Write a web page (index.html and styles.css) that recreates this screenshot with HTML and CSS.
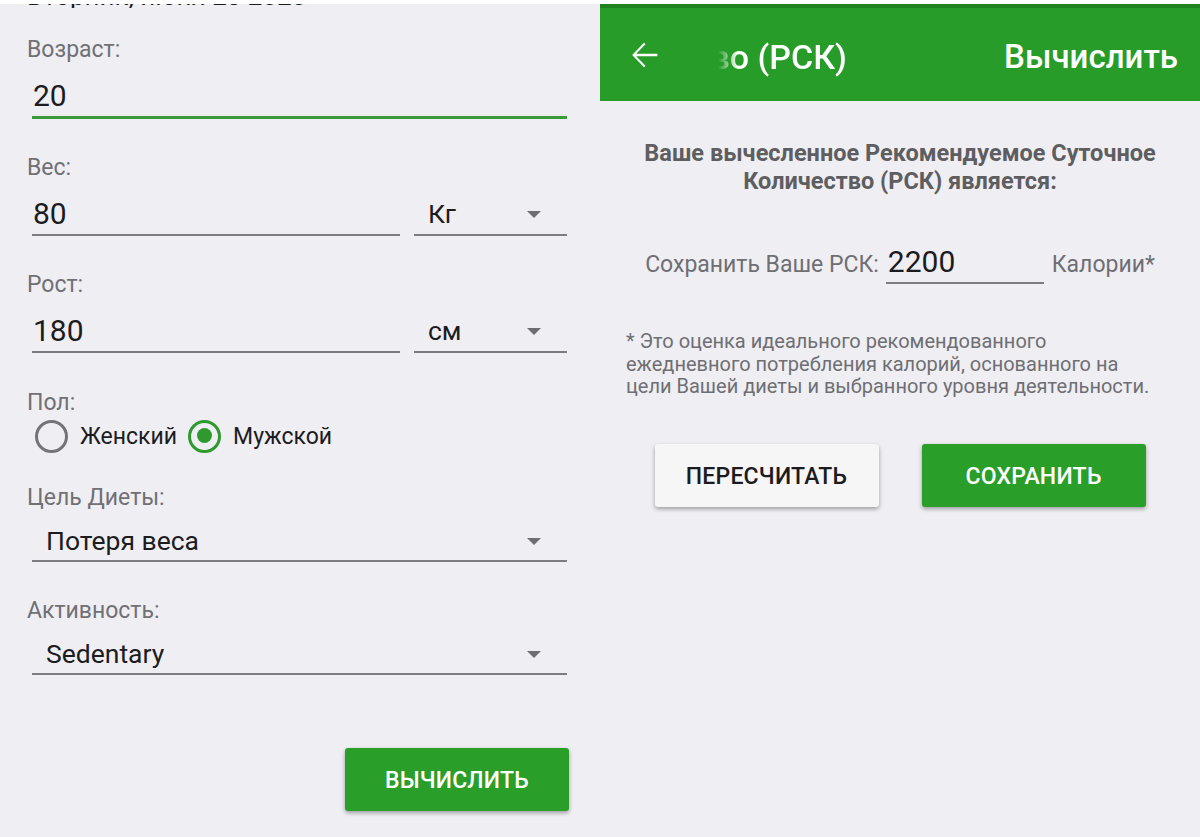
FILE: index.html
```html
<!DOCTYPE html>
<html lang="ru">
<head>
<meta charset="utf-8">
<title>РСК</title>
<link rel="stylesheet" href="styles.css">
</head>
<body>
<div class="topbar"></div>
<div class="panels">
  <section class="left">
    <div class="date"><span>Вторник, июня 23 2020</span></div>

    <div class="field f-first">
      <div class="label">Возраст:</div>
      <div class="row">
        <div class="text-input focused">20</div>
      </div>
    </div>

    <div class="field">
      <div class="label">Вес:</div>
      <div class="row">
        <div class="text-input">80</div>
        <div class="unit-select"><span>Кг</span><span class="caret"></span></div>
      </div>
    </div>

    <div class="field">
      <div class="label">Рост:</div>
      <div class="row">
        <div class="text-input">180</div>
        <div class="unit-select"><span>см</span><span class="caret"></span></div>
      </div>
    </div>

    <div class="field f-gender">
      <div class="label">Пол:</div>
      <div class="radios">
        <span class="radio"></span><span class="radio-label">Женский</span>
        <span class="radio checked"></span><span class="radio-label">Мужской</span>
      </div>
    </div>

    <div class="field f-goal">
      <div class="label">Цель Диеты:</div>
      <div class="spinner"><span>Потеря веса</span><span class="caret"></span></div>
    </div>

    <div class="field f-activity">
      <div class="label">Активность:</div>
      <div class="spinner"><span>Sedentary</span><span class="caret"></span></div>
    </div>

    <div class="actions-left">
      <button class="btn btn-green">ВЫЧИСЛИТЬ</button>
    </div>
  </section>

  <section class="right">
    <header class="appbar">
      <svg class="back" viewBox="0 0 24 24" width="40" height="40"><path d="M20 11.2H7.3l5.6-5.6-.9-.9L4.9 12l7.1 7.3.9-.9-5.6-5.6H20z" fill="#fff"/></svg>
      <div class="title-clip"><span>Количество (РСК)</span></div>
      <div class="appbar-action">Вычислить</div>
    </header>

    <h2 class="result-title">Ваше вычесленное Рекомендуемое Суточное<br>Количество (РСК) является:</h2>

    <div class="result-row">
      <span class="result-label">Сохранить Ваше РСК:</span>
      <span class="result-input">2200</span>
      <span class="result-label">Калории*</span>
    </div>

    <p class="note">* Это оценка идеального рекомендованного<br>ежедневного потребления калорий, основанного на<br>цели Вашей диеты и выбранного уровня деятельности.</p>

    <div class="actions-right">
      <button class="btn btn-light">ПЕРЕСЧИТАТЬ</button>
      <button class="btn btn-green">СОХРАНИТЬ</button>
    </div>
  </section>
</div>
</body>
</html>
```

FILE: styles.css
```css
* { box-sizing: border-box; }

html, body {
  margin: 0;
  padding: 0;
  background: #efeef3;
  font-family: Roboto, "Noto Sans", "Liberation Sans", sans-serif;
  color: #1c1c1e;
}

.topbar {
  height: 4px;
  background: #ffffff;
}

.panels {
  display: grid;
  grid-template-columns: 600px 600px;
  height: 833px;
}

/* ---------- left panel ---------- */
.left {
  padding-left: 27px;
  display: flex;
  flex-direction: column;
}

.date {
  flex: none;
  height: 4px;
  overflow: hidden;
}
.date span {
  display: block;
  margin-top: -21px;
  font-size: 26px;
  line-height: 26px;
  color: #1c1c1e;
  white-space: nowrap;
}

.field { margin-top: 37px; }
.f-first { margin-top: 30px; }
.f-gender { margin-top: 38px; }
.f-goal { margin-top: 33px; }
.f-activity { margin-top: 37px; }

.label {
  font-size: 23px;
  line-height: 24px;
  color: #707075;
}

.row {
  display: flex;
  gap: 14px;
  margin: 14px 0 0 5px;
  width: 535px;
}

.text-input {
  flex: 1;
  height: 42px;
  border-bottom: 2px solid #7c7c80;
  font-size: 30px;
  line-height: 37px;
  padding-top: 1px;
  padding-left: 1px;
  color: #1c1c1e;
}
.text-input.focused {
  border-bottom: 3px solid #3b9b3b;
  height: 43px;
}

.unit-select {
  width: 153px;
  height: 42px;
  border-bottom: 2px solid #7c7c80;
  display: flex;
  align-items: center;
  justify-content: space-between;
  padding: 0 26px 0 14px;
  font-size: 26.5px;
  line-height: 40px;
}

.caret {
  width: 0;
  height: 0;
  border-left: 7px solid transparent;
  border-right: 7px solid transparent;
  border-top: 7px solid #6e6e72;
}

.radios {
  display: flex;
  align-items: center;
  height: 34px;
  margin-top: 4px;
  margin-left: 8px;
}
.radio {
  flex: none;
  width: 33px;
  height: 33px;
  border-radius: 50%;
  border: 3px solid #747478;
  margin-right: 12px;
  position: relative;
}
.radio.checked {
  border: 3.5px solid #2e9a2e;
}
.radio.checked::after {
  content: "";
  position: absolute;
  left: 5.5px;
  top: 5.5px;
  width: 15px;
  height: 15px;
  border-radius: 50%;
  background: #2e9a2e;
}
.radio-label {
  font-size: 23px;
  margin-right: 11px;
}

.spinner {
  margin: 12px 0 0 5px;
  width: 535px;
  height: 40px;
  border-bottom: 2px solid #7c7c80;
  display: flex;
  align-items: center;
  justify-content: space-between;
  padding: 0 26px 0 14px;
  font-size: 26.5px;
  line-height: 38px;
}

.actions-left {
  margin-top: 73px;
  width: 542px;
  display: flex;
  justify-content: flex-end;
}

.btn {
  font-family: Roboto, "Noto Sans", "Liberation Sans", sans-serif;
  font-size: 23px;
  font-weight: 500;
  letter-spacing: 0.2px;
  border: none;
  border-radius: 3px;
  height: 63px;
  width: 224px;
  box-shadow: 0 2px 4px rgba(0, 0, 0, 0.35);
  padding: 2px 0 0;
}
.btn-green {
  background: #299e29;
  color: #ffffff;
}
.btn-light {
  background: #f6f6f6;
  color: #1c1c1e;
}

/* ---------- right panel ---------- */
.right {
  display: flex;
  flex-direction: column;
  align-items: center;
}

.appbar {
  align-self: stretch;
  height: 97px;
  background: #289c28;
  border-top: 4px solid #1f821f;
  display: flex;
  align-items: center;
  color: #ffffff;
  padding: 0 22px 0 24px;
}
.back { flex: none; }
.title-clip {
  flex: none;
  width: 129px;
  margin: 4px 0 0 54px;
  overflow: hidden;
  display: flex;
  justify-content: flex-end;
  white-space: nowrap;
  font-size: 34px;
  font-weight: 500;
  -webkit-mask-image: linear-gradient(to right, transparent 0, #000 20px);
  mask-image: linear-gradient(to right, transparent 0, #000 20px);
}
.title-clip span { flex: none; }
.appbar-action {
  margin: 4px 0 0 auto;
  font-size: 33px;
  font-weight: 500;
}

.result-title {
  margin: 38px 0 0;
  font-size: 23.5px;
  line-height: 28px;
  font-weight: 700;
  color: #5e5e61;
  text-align: center;
}

.result-row {
  display: flex;
  align-items: baseline;
  margin-top: 48px;
}
.result-label {
  font-size: 23px;
  color: #6e6e73;
}
.result-input {
  width: 158px;
  height: 41px;
  border-bottom: 2px solid #7c7c80;
  font-size: 30px;
  line-height: 37px;
  margin: 0 8px 0 7px;
  padding-left: 2px;
  color: #1c1c1e;
}

.note {
  align-self: stretch;
  margin: 46px 0 0;
  padding-left: 26px;
  font-size: 20px;
  line-height: 22.5px;
  color: #6e6e73;
}

.actions-right {
  display: flex;
  gap: 43px;
  margin-top: 46px;
}
```
